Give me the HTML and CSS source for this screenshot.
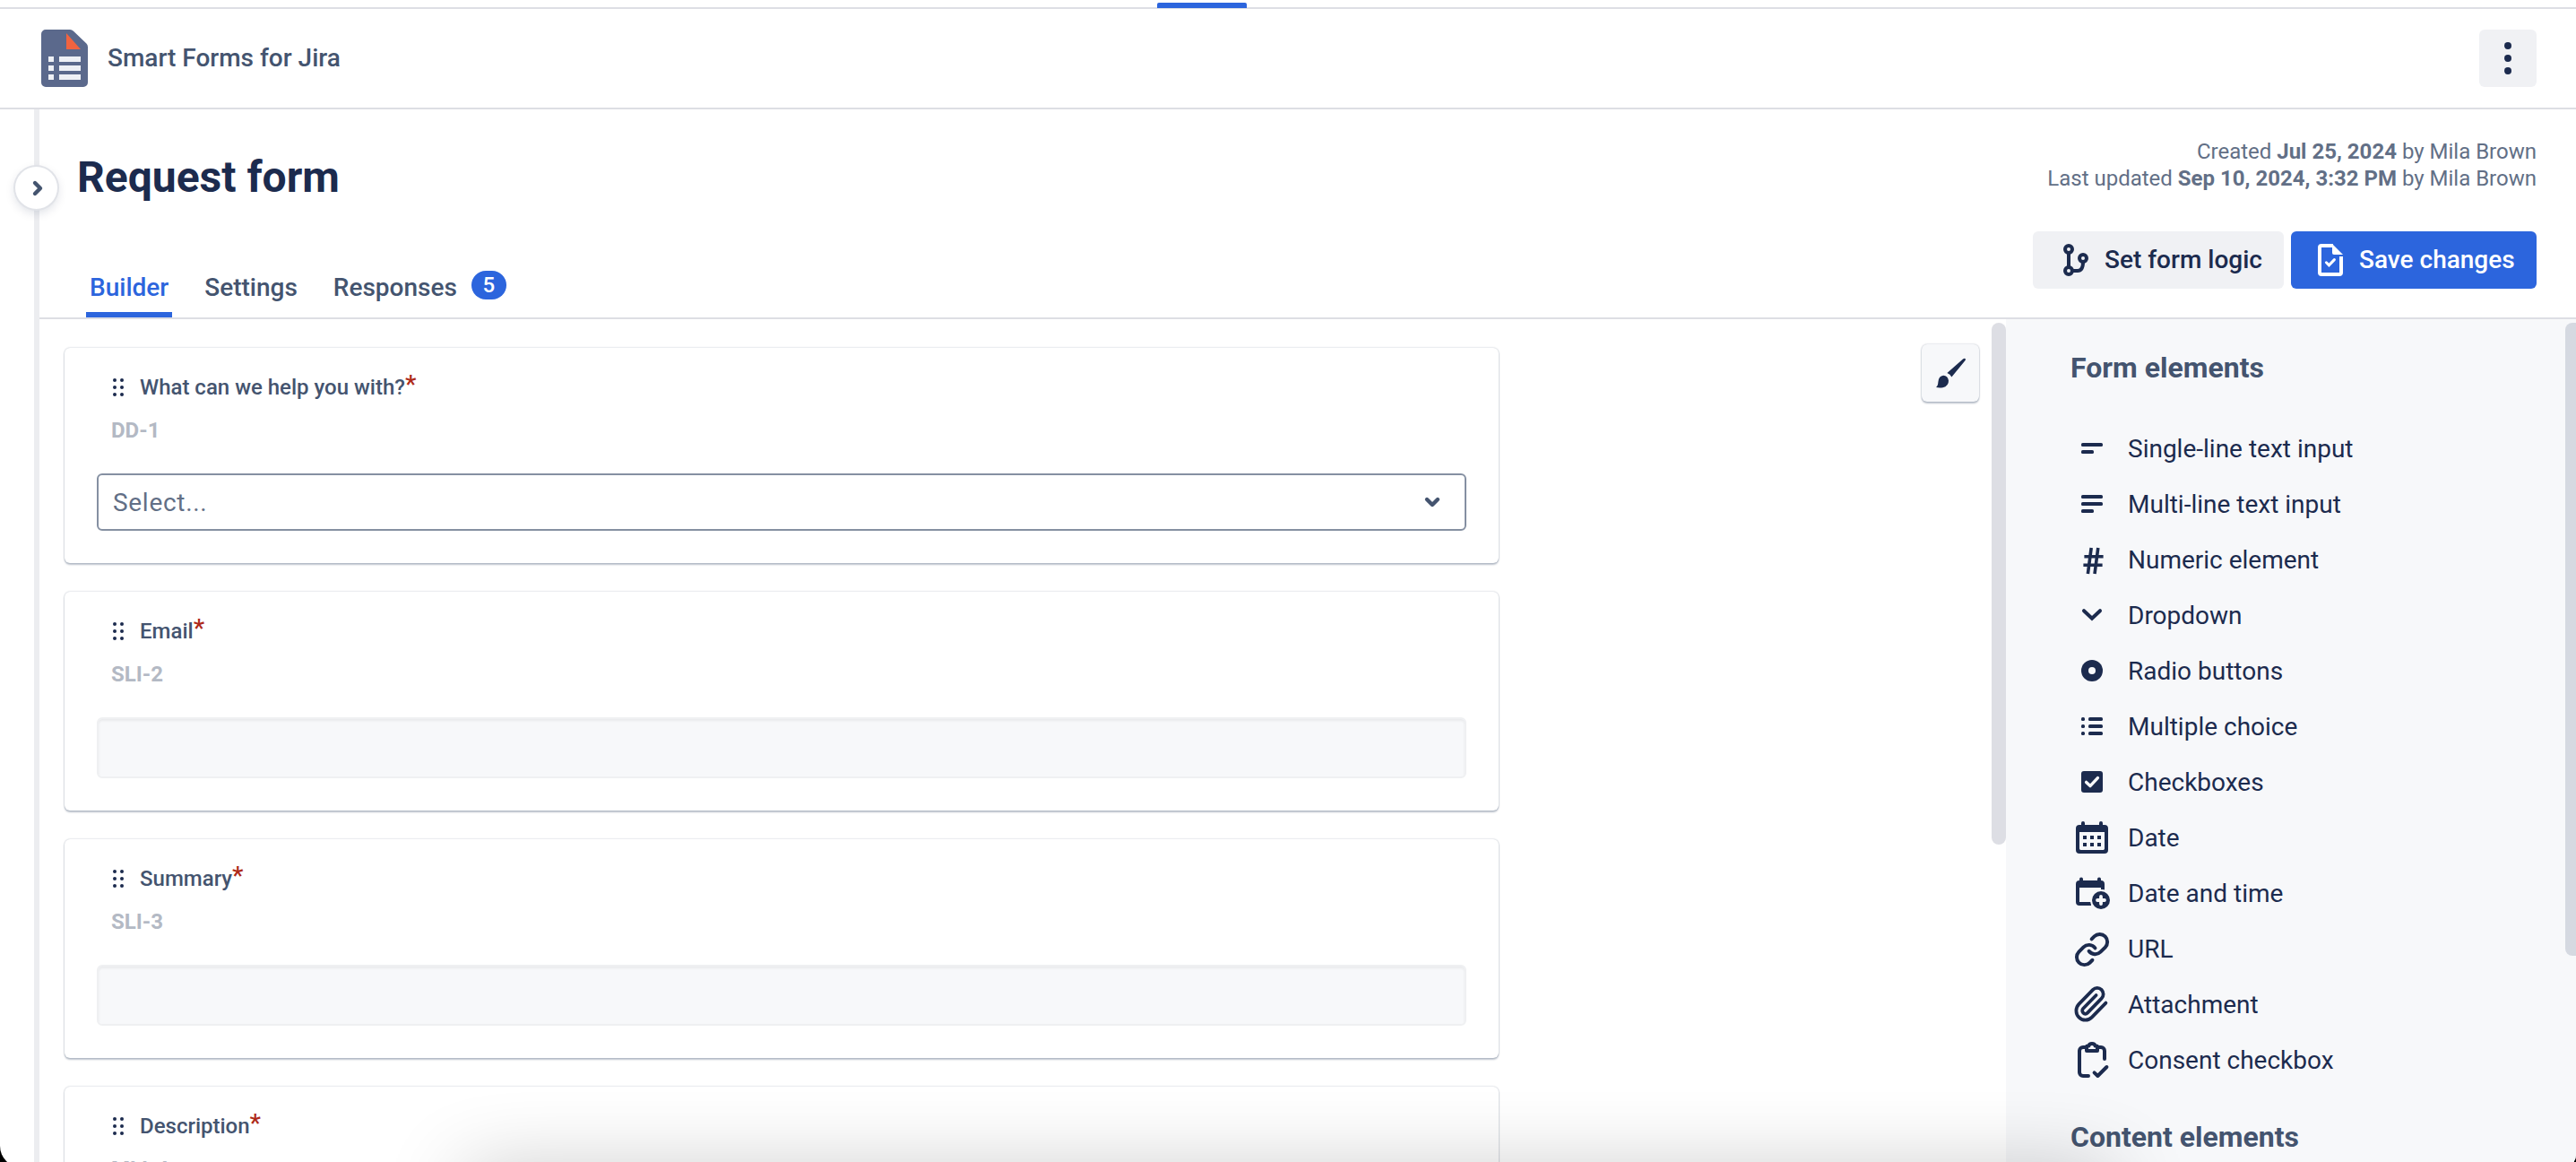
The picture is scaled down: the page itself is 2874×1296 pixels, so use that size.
FILE: index.html
```
<!DOCTYPE html>
<html lang="en">
<head>
    <meta charset="UTF-8">
    <meta name="viewport" content="width=device-width, initial-scale=1.0">
    <title>Smart Forms for Jira</title>
    <link rel="stylesheet" href="styles.css">
</head>
<body>
    <div class="window">
        <nav class="top-nav">
            <div class="top-nav-active"></div>
        </nav>

        <header class="app-header">
            <svg class="logo" viewBox="0 0 26 32">
                <path fill="#5b698c" d="M2.5 0H16q1.2 0 2 .9l7.2 6.9q.8.8.8 2v19.7a2.5 2.5 0 0 1-2.5 2.5h-21A2.5 2.5 0 0 1 0 29.5v-27A2.5 2.5 0 0 1 2.5 0z"/>
                <path fill="#f1633f" d="M14 2v9h8z"/>
                <path fill="#eef0f5" d="M4 15h3v3H4zM10 15h12v3H10zM4 20h3v3H4zM10 20h12v3H10zM4 25h3v3H4zM10 25h12v3H10z"/>
            </svg>
            <span class="app-name">Smart Forms for Jira</span>
            <button class="more-button" aria-label="More">
                <svg class="icon" viewBox="0 0 24 24">
                    <circle cx="12" cy="5" r="2"/><circle cx="12" cy="12" r="2"/><circle cx="12" cy="19" r="2"/>
                </svg>
            </button>
        </header>

        <div class="page">
            <div class="side-rail">
                <button class="expand-button" aria-label="Expand sidebar">
                    <svg class="icon" viewBox="0 0 24 24">
                        <path class="line" stroke-width="2.2" stroke-linecap="round" stroke-linejoin="round" d="M11 9l3 3-3 3"/>
                    </svg>
                </button>
            </div>

            <main class="content">
                <section class="form-header">
                    <div class="form-title">
                        <h1>Request form</h1>
                        <div class="tabs">
                            <a class="tab active">Builder</a>
                            <a class="tab">Settings</a>
                            <a class="tab">Responses <span class="badge">5</span></a>
                        </div>
                    </div>
                    <div class="form-info">
                        <p>Created <b>Jul 25, 2024</b> by Mila Brown</p>
                        <p>Last updated <b>Sep 10, 2024, 3:32 PM</b> by Mila Brown</p>
                        <div class="actions">
                            <button class="btn">
                                <svg class="icon" viewBox="0 0 24 24">
                                    <g class="line" stroke-width="2">
                                        <circle cx="8" cy="6" r="2"/><circle cx="8" cy="18" r="2"/><circle cx="16" cy="11" r="2"/>
                                        <path d="M8 8v8M10 18h3q3 0 3-5"/>
                                    </g>
                                </svg>
                                Set form logic
                            </button>
                            <button class="btn btn-primary">
                                <svg class="icon" viewBox="0 0 24 24">
                                    <path class="line" stroke-width="2" d="M13.5 4H7a1 1 0 0 0-1 1v14a1 1 0 0 0 1 1h10a1 1 0 0 0 1-1v-9"/>
                                    <path d="M13 3l6 6h-5a1 1 0 0 1-1-1z"/>
                                    <path class="line" stroke-width="1.5" stroke-linecap="round" d="M9.7 13.4l1.5 1.5 3-3.1"/>
                                </svg>
                                Save changes
                            </button>
                        </div>
                    </div>
                </section>

                <section class="workspace">
                    <div class="builder">
                        <div class="cards" id="cards"></div>
                        <button class="theme-button" aria-label="Theme">
                            <svg class="icon" viewBox="0 0 24 24">
                                <path d="M20.3 4q.4.3 0 1l-7.6 9.2q-.8-1.6-2.5-2.2L19 4.3q.8-.7 1.3-.3z"/>
                                <path d="M4 20q1.1-.8 1.2-3 .3-3.3 2.9-3.6 2.4.2 2.9 2.8.1 3-3.200 3.900-2 .3-3.800-.1z"/>
                            </svg>
                        </button>
                        <div class="scrollbar"></div>
                    </div>

                    <aside class="panel">
                        <div class="panel-body">
                            <h2>Form elements</h2>
                            <ul class="elements" id="elements"></ul>
                            <h2>Content elements</h2>
                        </div>
                        <div class="panel-scrollbar"></div>
                    </aside>
                </section>
            </main>
        </div>
        <div class="dock-shadow"></div>
    </div>

    <script>
        // Form fields shown in the builder
        const fields = [
            { label: 'What can we help you with?', key: 'DD-1', type: 'select' },
            { label: 'Email', key: 'SLI-2', type: 'text' },
            { label: 'Summary', key: 'SLI-3', type: 'text' },
            { label: 'Description', key: 'MLI-4', type: 'text' }
        ];

        // Elements that can be added to the form
        const elements = [
            { name: 'Single-line text input', icon: '<rect x="6" y="9" width="12" height="2" rx=".8"/><rect x="6" y="13" width="7" height="2" rx=".8"/>' },
            { name: 'Multi-line text input', icon: '<rect x="6" y="7" width="12" height="2" rx=".8"/><rect x="6" y="11" width="12" height="2" rx=".8"/><rect x="6" y="15" width="7" height="2" rx=".8"/>' },
            { name: 'Numeric element', icon: '<path class="line" stroke-width="1.8" d="M11.6 5.5L9.7 20M15.4 5.5L13.5 20M7.7 10.4h10.6M7.2 15.1h10.6"/>' },
            { name: 'Dropdown', icon: '<path class="line" stroke-linecap="round" stroke-width="2" d="M7.5 9.6l4.5 4.3 4.5-4.3"/>' },
            { name: 'Radio buttons', icon: '<circle cx="12" cy="12" r="6"/><circle class="bg" cx="12" cy="12" r="2"/>' },
            { name: 'Multiple choice', icon: '<rect x="6" y="7" width="2" height="2" rx=".8"/><rect x="6" y="11" width="2" height="2" rx=".8"/><rect x="6" y="15" width="2" height="2" rx=".8"/><rect x="10" y="7" width="8" height="2" rx=".8"/><rect x="10" y="11" width="8" height="2" rx=".8"/><rect x="10" y="15" width="8" height="2" rx=".8"/>' },
            { name: 'Checkboxes', icon: '<rect x="6" y="6" width="12" height="12" rx="1.5"/><path class="line-bg" stroke-width="1.7" stroke-linecap="round" stroke-linejoin="round" d="M8.8 12.2l2.2 2.1 4.2-4.5"/>' },
            { name: 'Date', icon: '<path fill-rule="evenodd" d="M6 5V4a1 1 0 0 1 2 0v1h8V4a1 1 0 0 1 2 0v1h1a2 2 0 0 1 2 2v12a2 2 0 0 1-2 2H5a2 2 0 0 1-2-2V7a2 2 0 0 1 2-2zM5 9v9.3q0 .7.7.7h12.6q.7 0 .7-.7V9z"/><path d="M7 11h2v2H7zM11 11h2v2h-2zM15 11h2v2h-2zM7 15h2v2H7zM11 15h2v2h-2zM15 15h2v2h-2z"/>' },
            { name: 'Date and time', icon: '<path fill-rule="evenodd" d="M5 5v-.7a1 1 0 0 1 2 0V5h8v-.7a1 1 0 0 1 2 0V5q2 0 2 2v3.300h-2V9H5v8h6.500v2H5q-2 0-2-2V7q0-2 2-2z"/><circle class="bg" cx="17" cy="16" r="6"/><circle cx="17" cy="16" r="5"/><path class="line-bg" stroke-width="1.9" stroke-linecap="round" d="M17 14v4M15 16h4"/>' },
            { name: 'URL', icon: '<g class="line" stroke-width="2.3" stroke-linecap="round" transform="translate(1.7 2.2) scale(.86)"><path d="M10 13a5 5 0 0 0 7.54.54l3-3a5 5 0 0 0-7.07-7.07l-1.72 1.71"/><path d="M14 11a5 5 0 0 0-7.54-.54l-3 3a5 5 0 0 0 7.07 7.07l1.71-1.71"/></g>' },
            { name: 'Attachment', icon: '<path class="line" stroke-width="2.2" stroke-linecap="round" transform="translate(1.5 1.7) scale(.85 .87)" d="M21.44 11.05l-9.19 9.19a6 6 0 0 1-8.49-8.49l9.19-9.19a4 4 0 0 1 5.66 5.66l-9.2 9.19a2 2 0 0 1-2.83-2.83l8.49-8.48"/>' },
            { name: 'Consent checkbox', icon: '<g class="line" stroke-width="2" stroke-linecap="round" stroke-linejoin="round"><path d="M9 5H7a2 2 0 0 0-2 2v12a2 2 0 0 0 2 2h3M15 5h2a2 2 0 0 1 2 2v4.500"/><path d="M9 5q0-.7.7-.7h.5q.3-1.300 1.800-1.300t1.800 1.300h.5q.7 0 .7.700v2H9zM13.300 19.200L15.200 21l5-5"/></g>' }
        ];

        function renderFields() {
            let html = '';
            fields.forEach(field => {
                let input = '<div class="text-input"></div>';
                if (field.type === 'select') {
                    input = `
                        <div class="select">
                            Select...
                            <svg class="icon" viewBox="0 0 24 24"><path class="line" stroke-width="2.2" stroke-linecap="round" stroke-linejoin="round" d="M9 10.5l3 3 3-3"/></svg>
                        </div>`;
                }
                html += `
                    <div class="card">
                        <div class="field-label">
                            <svg class="drag" viewBox="0 0 12 20">
                                <circle cx="2" cy="2" r="2"/><circle cx="10" cy="2" r="2"/>
                                <circle cx="2" cy="10" r="2"/><circle cx="10" cy="10" r="2"/>
                                <circle cx="2" cy="18" r="2"/><circle cx="10" cy="18" r="2"/>
                            </svg>
                            ${field.label}<span class="required">*</span>
                        </div>
                        <div class="field-key">${field.key}</div>
                        ${input}
                    </div>
                `;
            });
            document.getElementById('cards').innerHTML = html;
        }

        function renderElements() {
            let html = '';
            elements.forEach(element => {
                html += `<li><svg class="icon" viewBox="0 0 24 24">${element.icon}</svg>${element.name}</li>`;
            });
            document.getElementById('elements').innerHTML = html;
        }

        renderFields();
        renderElements();
    </script>
</body>
</html>
```
FILE: styles.css
```
* {
    box-sizing: border-box;
}

body {
    margin: 0;
    height: 100vh;
    overflow: hidden;
    background-color: #000;
    font-family: Roboto, "Liberation Sans", sans-serif;
    font-size: 28px;
    color: #1c2b4e;
}

h1,
h2,
p,
ul {
    margin: 0;
    padding: 0;
}

button {
    border: none;
    padding: 0;
    font: inherit;
    color: inherit;
    display: flex;
    align-items: center;
    justify-content: center;
}

.window {
    position: relative;
    display: flex;
    flex-direction: column;
    height: calc(100vh + 6px);
    background-color: #fff;
    border-radius: 0 0 14px 24px;
    overflow: hidden;
}

.icon {
    width: 48px;
    height: 48px;
    flex: none;
    fill: currentColor;
}

.line {
    fill: none;
    stroke: currentColor;
}

.line-bg {
    fill: none;
    stroke: #f7f8fa;
}

.bg {
    fill: #f7f8fa;
}

/* Header */
.top-nav {
    height: 10px;
    flex: none;
    padding: 3px 0 0 1291px;
    border-bottom: 2px solid #dddee4;
}

.top-nav-active {
    width: 100px;
    height: 6px;
    background-color: #2c65dd;
    border-radius: 2px 2px 0 0;
}

.app-header {
    display: flex;
    align-items: center;
    flex: none;
    height: 112px;
    padding: 0 44px 0 46px;
    border-bottom: 2px solid #dddee4;
}

.logo {
    width: 52px;
    height: 64px;
}

.app-name {
    margin-left: 22px;
    padding-bottom: 2px;
    font-weight: 500;
    color: #44546f;
}

.more-button {
    margin-left: auto;
    width: 64px;
    height: 64px;
    border-radius: 6px;
    background-color: #f0f1f4;
}

/* Sidebar */
.page {
    display: flex;
    flex: 1;
    min-height: 0;
}

.side-rail {
    position: relative;
    width: 44px;
    flex: none;
    border-right: 6px solid #ecedf0;
}

.expand-button {
    position: absolute;
    top: 64px;
    left: 17px;
    z-index: 1;
    width: 47px;
    height: 47px;
    border-radius: 50%;
    background-color: #fff;
    color: #44546f;
    box-shadow: 0 0 0 2px #e1e3e8, 0 4px 12px rgba(9, 30, 66, 0.15);
}

.content {
    flex: 1;
    display: flex;
    flex-direction: column;
    min-width: 0;
}

/* Form title, tabs and buttons */
.form-header {
    display: flex;
    justify-content: space-between;
    flex: none;
    height: 234px;
    padding: 0 44px 0 42px;
    border-bottom: 2px solid #dddee4;
}

.form-title {
    display: flex;
    flex-direction: column;
    justify-content: space-between;
}

h1 {
    margin-top: 47px;
    font-size: 48px;
    line-height: 58px;
}

.tabs {
    display: flex;
    padding-left: 10px;
    gap: 32px;
}

.tab {
    display: flex;
    align-items: center;
    height: 66px;
    padding: 5px 4px 0;
    border-bottom: 6px solid transparent;
    font-weight: 500;
    color: #44546f;
}

.tab.active {
    color: #2c65dd;
    border-color: #2c65dd;
}

.badge {
    margin: -6px 0 0 16px;
    width: 39px;
    height: 32px;
    line-height: 32px;
    border-radius: 16px;
    background-color: #2c65dd;
    color: #fff;
    font-size: 24px;
    text-align: center;
}

.form-info {
    padding-top: 32px;
    text-align: right;
    font-size: 24px;
    line-height: 30px;
    color: #626f86;
}

.actions {
    display: flex;
    justify-content: flex-end;
    gap: 8px;
    margin-top: 44px;
}

.btn {
    justify-content: flex-start;
    gap: 8px;
    width: 280px;
    height: 64px;
    padding-left: 24px;
    border-radius: 6px;
    background-color: #f0f1f4;
    font-size: 28px;
    font-weight: 500;
    color: #1c2b4e;
}

.btn-primary {
    width: 274px;
    padding-left: 20px;
    background-color: #2c65dd;
    color: #fff;
}

/* Builder */
.workspace {
    display: flex;
    flex: 1;
    min-height: 0;
    overflow: hidden;
}

.builder {
    display: flex;
    flex: 1;
    align-items: flex-start;
    padding: 4px 0 0 28px;
}

.cards {
    width: 1600px;
    margin-top: 28px;
}

.card {
    height: 244px;
    margin-bottom: 32px;
    padding: 28px 36px 0;
    border-radius: 6px;
    background-color: #fff;
    box-shadow: 0 2px 2px rgba(9, 30, 66, 0.25), 0 0 2px rgba(9, 30, 66, 0.31);
}

.card:first-child {
    height: 240px;
}

.field-label {
    display: flex;
    align-items: center;
    height: 32px;
    padding-left: 18px;
    font-size: 24px;
    font-weight: 500;
    color: #44546f;
}

.drag {
    width: 12px;
    height: 20px;
    margin-right: 18px;
    fill: #1c2b4e;
}

.required {
    margin-top: -8px;
    font-size: 28px;
    color: #ae2a19;
}

.field-key {
    padding-left: 16px;
    margin-top: 16px;
    font-size: 24px;
    font-weight: 700;
    line-height: 32px;
    color: #b3b9c4;
}

.select {
    display: flex;
    align-items: center;
    justify-content: space-between;
    height: 64px;
    margin-top: 32px;
    padding: 0 12px 0 16px;
    border: 2px solid #8590a2;
    border-radius: 6px;
    letter-spacing: 0.7px;
    color: #626f86;
}

.select .icon {
    color: #44546f;
}

.text-input {
    height: 68px;
    margin-top: 32px;
    border: 2px solid #eff0f2;
    border-radius: 6px;
    background-color: #f7f8fa;
    box-shadow: inset 0 2px 3px rgba(0, 0, 0, 0.06);
}

.theme-button {
    margin: 24px 14px 0 auto;
    width: 64px;
    height: 64px;
    border-radius: 6px;
    background-color: #f7f8fa;
    box-shadow: 0 2px 2px rgba(9, 30, 66, 0.25), 0 0 2px rgba(9, 30, 66, 0.31);
}

.scrollbar {
    width: 16px;
    height: 582px;
    border-radius: 8px;
    background-color: #dddee4;
}

/* Elements panel */
.panel {
    display: flex;
    justify-content: space-between;
    width: 636px;
    background-color: #f7f8fa;
}

.panel-body {
    padding: 35px 0 0 72px;
}

.panel h2 {
    font-size: 32px;
    line-height: 38px;
    color: #44546f;
}

.elements {
    list-style: none;
    margin: 40px 0 36px;
}

.elements li {
    display: flex;
    align-items: center;
    gap: 16px;
    height: 62px;
}

.panel-scrollbar {
    width: 12px;
    height: 706px;
    margin-top: 4px;
    border-radius: 8px 0 0 8px;
    background-color: #d5d9e1;
}

/* Shadow cast by the dock under the window */
.dock-shadow {
    position: absolute;
    left: 520px;
    right: 520px;
    bottom: -60px;
    height: 50px;
    box-shadow: 0 0 90px rgba(0, 0, 0, 0.3);
}
```
